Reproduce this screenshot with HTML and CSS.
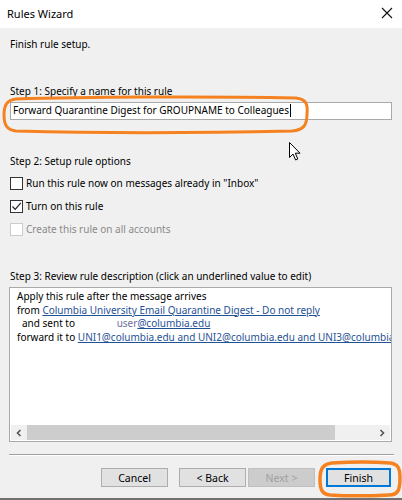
FILE: index.html
```html
<!DOCTYPE html>
<html lang="en">
<head>
  <meta charset="UTF-8">
  <title>Rules Wizard</title>
  <link rel="stylesheet" href="styles.css">
</head>
<body>

<div class="window">
  <div class="titlebar">
    <span class="title">Rules Wizard</span>
    <svg class="close" width="12" height="12" viewBox="0 0 12 12">
      <path d="M1 1 L11 11 M11 1 L1 11" stroke="#111" stroke-width="1.1" fill="none"/>
    </svg>
  </div>

  <div class="content">
    <div class="intro">Finish rule setup.</div>

    <div class="step step-one">
      <div class="step-label">Step 1: Specify a name for this rule</div>
      <div class="name-box">Forward Quarantine Digest for GROUPNAME to Colleagues<span class="caret"></span></div>
    </div>

    <div class="step step-two">
      <div class="step-label">Step 2: Setup rule options</div>
      <div class="option"><span class="box"></span>Run this rule now on messages already in "Inbox"</div>
      <div class="option"><span class="box checked">
        <svg width="11" height="11" viewBox="0 0 11 11"><path d="M1.5 5.5 L4.2 8.3 L9.8 1.8" stroke="#222" stroke-width="1.2" fill="none"/></svg>
      </span>Turn on this rule</div>
      <div class="option disabled"><span class="box"></span>Create this rule on all accounts</div>
    </div>

    <div class="step step-three">
      <div class="step-label">Step 3: Review rule description (click an underlined value to edit)</div>
      <div class="desc-box">
        <div class="desc-text">
          <div>Apply this rule after the message arrives</div>
          <div>from <a href="#">Columbia University Email Quarantine Digest - Do not reply</a></div>
          <div class="indent">and sent to <span class="spacer"></span><span class="faded">user</span><a href="#">@columbia.edu</a></div>
          <div>forward it to <a href="#">UNI1@columbia.edu and UNI2@columbia.edu and UNI3@columbia.edu</a></div>
        </div>
        <div class="hscroll">
          <span class="arrow">
            <svg width="8" height="8" viewBox="0 0 8 8"><path d="M5.5 1 L2.5 4 L5.5 7" stroke="#555" stroke-width="1.6" fill="none"/></svg>
          </span>
          <div class="track"><div class="thumb"></div></div>
          <span class="arrow">
            <svg width="8" height="8" viewBox="0 0 8 8"><path d="M2.5 1 L5.5 4 L2.5 7" stroke="#555" stroke-width="1.6" fill="none"/></svg>
          </span>
        </div>
      </div>
    </div>

    <div class="separator"></div>

    <div class="buttons">
      <button type="button">Cancel</button>
      <div class="nav-group">
        <button type="button">&lt; Back</button>
        <button type="button" disabled>Next &gt;</button>
      </div>
      <button type="button" class="default">Finish</button>
    </div>
  </div>

  <!-- annotations drawn over the dialog -->
  <svg class="marks" width="402" height="500" viewBox="0 0 402 500">
    <path d="M16 99 C80 97 200 96 296 98 C306 99 308 104 307 114 C307 126 303 130 292 131 C200 133 90 133 16 131 C7 130 4 125 4 115 C4 105 7 100 16 99 Z"
          stroke="#f58220" stroke-width="3" fill="none"/>
    <path d="M332 463 C350 462 375 462 390 463 C398 464 400 468 400 478 C400 490 398 495 389 495 C370 496 345 496 330 495 C322 494 320 490 320 479 C320 469 323 464 332 463 Z"
          stroke="#f58220" stroke-width="3.5" fill="none"/>
  </svg>

  <svg class="pointer" width="13" height="20" viewBox="0 0 13 20">
    <path d="M0.5 0.5 L0.5 15.5 L4 12 L6.6 18 L8.8 17 L6.3 11.2 L11 11.2 Z" fill="#fff" stroke="#000" stroke-width="1"/>
  </svg>
</div>

</body>
</html>
```

FILE: styles.css
```css
body {
  margin: 0;
  padding: 0;
  font-family: "Noto Sans", "Open Sans", sans-serif;
  font-size: 10px;
  line-height: 13px;
  color: #000;
}

.window {
  position: relative;
  width: 402px;
  height: 500px;
  background-color: #f0f0f0;
  box-sizing: border-box;
  border-bottom: 2px solid #707070;
  overflow: hidden;
}

.titlebar {
  height: 28px;
  background-color: #fff;
  display: flex;
  align-items: center;
  justify-content: space-between;
  padding: 0 9px 0 7px;
}

.title {
  font-size: 11px;
  margin-top: -1px;
}

.close {
  margin-top: -2px;
}

.content {
  padding: 0 10px 0 9px;
}

.intro {
  padding-top: 10px;
  padding-left: 1px;
}

.step-label {
  padding-left: 1px;
}

.step-one {
  margin-top: 34px;
}

.name-box {
  margin-top: 4px;
  height: 18px;
  box-sizing: border-box;
  border: 1px solid #a9a9a9;
  background-color: #fff;
  padding: 1px 2px;
  margin-left: 1px;
  white-space: nowrap;
}

.caret {
  display: inline-block;
  width: 1px;
  height: 13px;
  margin-left: 1px;
  background-color: #000;
  vertical-align: -3px;
}

.step-two {
  margin-top: 35px;
}

.step-two .step-label {
  margin-bottom: 4px;
}

.option {
  height: 23px;
  display: flex;
  align-items: center;
  padding-left: 1px;
}

.option .box {
  width: 13px;
  height: 13px;
  box-sizing: border-box;
  border: 1px solid #333;
  background-color: #fff;
  margin-right: 3px;
  display: flex;
  align-items: center;
  justify-content: center;
}

.option.disabled {
  color: #8a8a8a;
}

.option.disabled .box {
  border-color: #cccccc;
}

.step-three {
  margin-top: 29px;
}

.desc-box {
  margin-top: 4px;
  height: 155px;
  box-sizing: border-box;
  border: 1px solid #a9a9a9;
  background-color: #fff;
  display: flex;
  flex-direction: column;
  justify-content: space-between;
}

.desc-text {
  padding: 2px 0 0 7px;
  line-height: 13.5px;
  white-space: nowrap;
  overflow: hidden;
}

.desc-text a {
  color: #1f5195;
  text-decoration: underline;
}

.indent {
  padding-left: 5px;
}

.spacer {
  display: inline-block;
  width: 39px;
}

.faded {
  color: #6f6f9a;
}

.hscroll {
  height: 15px;
  margin: 0 1px 1px 1px;
  background-color: #f0f0f0;
  display: flex;
  align-items: center;
}

.arrow {
  width: 16px;
  display: flex;
  justify-content: center;
}

.track {
  flex: 1;
  height: 100%;
}

.thumb {
  width: 308px;
  height: 100%;
  background-color: #cdcdcd;
}

.separator {
  margin-top: 12px;
  height: 1px;
  background-color: #a0a0a0;
  border-bottom: 1px solid #fff;
  margin-right: -2px;
}

.buttons {
  margin-top: 12px;
  display: flex;
  justify-content: flex-end;
  gap: 11px;
  padding-right: 1px;
}

.nav-group {
  display: flex;
  gap: 2px;
}

button {
  width: 67px;
  height: 19px;
  box-sizing: border-box;
  background-color: #e1e1e1;
  border: 1px solid #adadad;
  font-family: inherit;
  font-size: 10.5px;
  color: #000;
  padding: 0;
}

button:disabled {
  color: #a0a0a0;
  background-color: #cccccc;
  border-color: #bfbfbf;
}

button.default {
  width: 65px;
  border: 2px solid #0078d7;
}

.marks {
  position: absolute;
  left: 0;
  top: 0;
  pointer-events: none;
}

.pointer {
  position: absolute;
  left: 289px;
  top: 142px;
}
```
